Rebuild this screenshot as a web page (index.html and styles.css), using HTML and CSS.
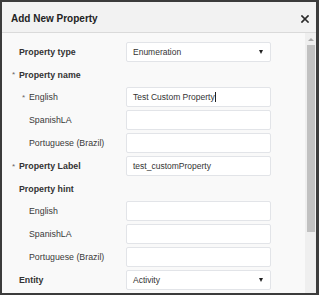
FILE: index.html
```html
<!DOCTYPE html>
<html>
<head>
<meta charset="utf-8">
<link rel="stylesheet" href="styles.css">
</head>
<body>
<div class="dialog">
  <div class="header">
    <div class="title">Add New Property</div>
    <svg class="close" width="8" height="8" viewBox="0 0 8 8"><path d="M1 1L7 7M7 1L1 7" stroke="#2b2b2b" stroke-width="1.7" stroke-linecap="square"/></svg>
  </div>
  <div class="body">
    <div class="form">
      <div class="label main">Property type</div>
      <div class="field select"><span class="value">Enumeration</span><i class="caret"></i></div>

      <div class="heading"><span class="star">*</span>Property name</div>

      <div class="label sub"><span class="star">*</span>English</div>
      <div class="field"><span class="value">Test Custom Property</span><span class="cursor"></span></div>
      <div class="label sub">SpanishLA</div>
      <div class="field"></div>
      <div class="label sub">Portuguese (Brazil)</div>
      <div class="field"></div>

      <div class="label main"><span class="star">*</span>Property Label</div>
      <div class="field"><span class="value">test_customProperty</span></div>

      <div class="heading">Property hint</div>

      <div class="label sub">English</div>
      <div class="field"></div>
      <div class="label sub">SpanishLA</div>
      <div class="field"></div>
      <div class="label sub">Portuguese (Brazil)</div>
      <div class="field"></div>

      <div class="label main">Entity</div>
      <div class="field select"><span class="value">Activity</span><i class="caret"></i></div>
    </div>
    <div class="scrollbar">
      <i class="up"></i>
      <div class="thumb"></div>
    </div>
  </div>
</div>
</body>
</html>
```
FILE: styles.css
```css
html, body {
  margin: 0;
  padding: 0;
  background: #ffffff;
}
.dialog {
  box-sizing: border-box;
  width: 319px;
  height: 295px;
  border-style: solid;
  border-color: #3c3c3c;
  border-width: 2px 3px 2px 2px;
  display: flex;
  flex-direction: column;
  font-family: "Liberation Sans", Arial, sans-serif;
  color: #333;
  overflow: hidden;
}
.header {
  box-sizing: border-box;
  height: 31px;
  flex: none;
  background: #f2f2f2;
  border-bottom: 1px solid #dadada;
  display: flex;
  align-items: center;
  justify-content: space-between;
  padding: 2px 7px 0 9px;
}
.title {
  font-size: 10px;
  font-weight: bold;
  color: #222;
}
.close {
  display: block;
  margin-top: 2px;
}
.body {
  flex: 1;
  display: flex;
  background: #f9f9f9;
  min-height: 0;
}
.form {
  flex: 1;
  padding: 9px 0 0 17px;
  display: grid;
  grid-template-columns: 107px 145px;
  row-gap: 3px;
  align-content: start;
}
.label, .heading {
  display: flex;
  align-items: center;
  font-size: 8.8px;
  white-space: nowrap;
}
.label {
  height: 20px;
}
.heading {
  grid-column: 1 / -1;
  height: 19px;
  font-weight: bold;
}
.main {
  font-weight: bold;
}
.sub {
  padding-left: 10px;
  font-weight: normal;
  color: #3a3a3a;
}
.star {
  display: inline-block;
  width: 7px;
  margin-left: -7px;
  color: #666;
  font-weight: normal;
  font-size: 8px;
}
.field {
  box-sizing: border-box;
  height: 20px;
  background: #ffffff;
  border: 1px solid #e2e4e8;
  border-radius: 2px;
  display: flex;
  align-items: center;
  padding: 0 6px;
  font-size: 8.5px;
  color: #333;
}
.select {
  justify-content: space-between;
}
.caret {
  display: block;
  width: 0;
  height: 0;
  border-left: 2.5px solid transparent;
  border-right: 2.5px solid transparent;
  border-top: 4px solid #222;
  margin-right: 1px;
}
.cursor {
  display: inline-block;
  width: 1px;
  height: 10px;
  background: #222;
  margin-left: 0;
}
.scrollbar {
  width: 11px;
  flex: none;
  background: #efefef;
  display: flex;
  flex-direction: column;
  align-items: center;
  padding-top: 5px;
  box-sizing: border-box;
}
.up {
  display: block;
  width: 0;
  height: 0;
  border-left: 3px solid transparent;
  border-right: 3px solid transparent;
  border-bottom: 3px solid #a8a8a8;
}
.thumb {
  width: 8px;
  height: 187px;
  margin-top: 4px;
  background: #c1c1c1;
}
```
